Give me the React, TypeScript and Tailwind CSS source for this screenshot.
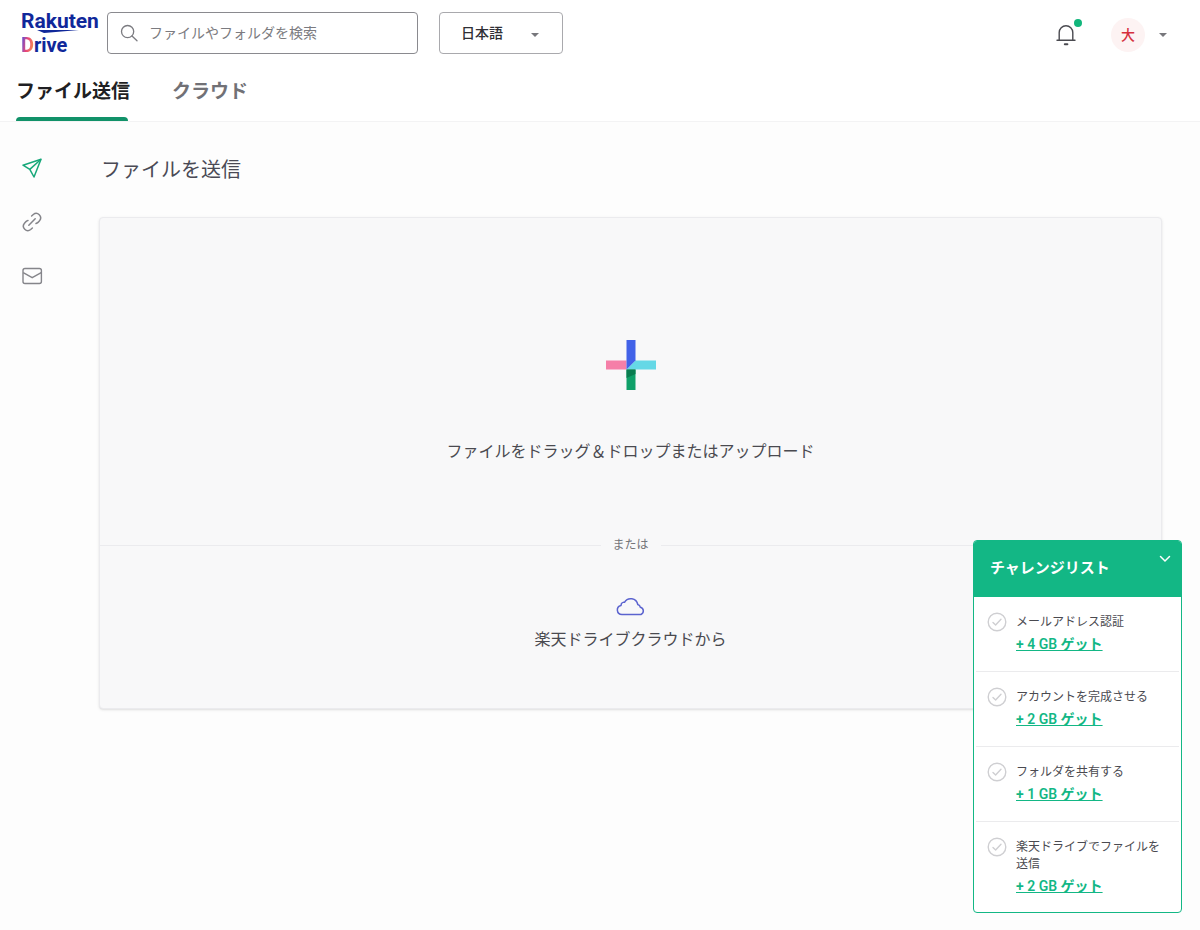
import { useState } from "react";

const challenges = [
    { title: "メールアドレス認証", reward: "+ 4 GB ゲット" },
    { title: "アカウントを完成させる", reward: "+ 2 GB ゲット" },
    { title: "フォルダを共有する", reward: "+ 1 GB ゲット" },
    { title: "楽天ドライブでファイルを送信", reward: "+ 2 GB ゲット" },
];

function Logo() {
    return (
        <a href="#" aria-label="Rakuten Drive" className="relative block w-[86px] shrink-0 font-[Roboto,sans-serif] font-bold text-[#10289a]">
            <span className="block text-[21px] leading-6">Rakuten</span>
            <span className="block text-xl leading-6">
                <span className="bg-linear-100 from-[#5b3fd0] from-10% via-[#e8407a] via-45% to-[#f7a01d] bg-clip-text text-transparent">D</span>rive
            </span>
            <svg viewBox="0 0 42 4" className="absolute left-4 top-[21px] w-[42px] h-1" fill="#10289a" aria-hidden="true">
                <path d="M0 0h42L7 3z" />
            </svg>
        </a>
    );
}

function Header() {
    return (
        <header className="bg-white border-b border-[#f3f3f4] pt-3">
            <div className="flex items-center h-[42px] pl-[21px] pr-[33px]">
                <Logo />
                <label className="flex items-center w-[311px] h-[42px] border border-[#8a8a8f] rounded px-3">
                    <svg viewBox="0 0 20 20" className="w-5 h-5 shrink-0" fill="none" stroke="#7b7b80" strokeWidth="1.3" strokeLinecap="round">
                        <circle cx="7.6" cy="8.6" r="6.1" />
                        <path d="M12 13l5 4.8" />
                    </svg>
                    <input
                        type="text"
                        aria-label="ファイルやフォルダを検索"
                        placeholder="ファイルやフォルダを検索"
                        className="w-full min-w-0 ml-[9px] text-sm outline-none placeholder:text-[#7b7b80]"
                    />
                </label>
                <div className="relative ml-[21px]">
                    <select aria-label="言語" className="appearance-none w-[124px] h-[42px] border border-[#a9a9ad] rounded bg-white pl-[21px] text-sm font-medium text-[#2f2f35]">
                        <option>日本語</option>
                        <option>English</option>
                    </select>
                    <svg viewBox="0 0 8 4" className="absolute right-6 top-[21px] w-2 h-1 pointer-events-none" fill="#77777c">
                        <path d="M0 0h8L4 4z" />
                    </svg>
                </div>
                <button aria-label="お知らせ" className="relative ml-auto mt-1 w-6 h-6">
                    <svg viewBox="0 0 24 24" className="w-6 h-6" fill="none" stroke="#4a4a50" strokeWidth="1.4" strokeLinecap="round">
                        <path d="M3 17.3h18" />
                        <path d="M5.2 17V9.5a6.8 6.8 0 0 1 13.6 0V17" />
                        <path d="M10.8 21.2h2.6" strokeWidth="2" />
                    </svg>
                    <span className="absolute -top-1 -right-1 w-2 h-2 rounded-full bg-[#12b67c]" />
                </button>
                <button aria-label="アカウント" className="flex items-center gap-[14px] ml-[33px] mt-1">
                    <span className="flex items-center justify-center w-[34px] h-[34px] rounded-full bg-[#fdf3f3] text-sm font-medium text-[#d5303e]">大</span>
                    <svg viewBox="0 0 8 4" className="w-2 h-1" fill="#77777c">
                        <path d="M0 0h8L4 4z" />
                    </svg>
                </button>
            </div>
            <nav className="flex gap-11 mt-[10px] px-4">
                <a href="#" className="relative flex items-center h-[57px] w-28 text-[19px] whitespace-nowrap font-bold text-[#1f1f23]">
                    ファイル送信
                    <span className="absolute inset-x-0 bottom-0 h-1 rounded-t bg-[#119269]" />
                </a>
                <a href="#" className="flex items-center h-[57px] text-[19px] font-bold text-[#717176]">クラウド</a>
            </nav>
        </header>
    );
}

function Sidebar() {
    return (
        <nav className="flex flex-col gap-[30px] pt-[34px] pl-5 w-[99px] shrink-0">
            <a href="#" aria-label="ファイルを送信">
                <svg viewBox="0 0 24 24" className="w-6 h-6" fill="none" stroke="#17a87a" strokeWidth="1.5" strokeLinejoin="round">
                    <path d="M21 3.2L3 9.2l6.800 4.200L14 21z" />
                    <path d="M21 3.200L9.800 13.400" />
                </svg>
            </a>
            <a href="#" aria-label="リンク">
                <svg viewBox="0 0 24 24" className="w-6 h-6" fill="none" stroke="#85858a" strokeWidth="1.5" strokeLinecap="round">
                    <path d="M11.600 6l1.700-1.500a4.400 4.400 0 0 1 6.200 6.200L18 12.400a4.400 4.400 0 0 1-2 1.100" />
                    <path d="M12.400 18l-1.700 1.500a4.400 4.400 0 0 1-6.200-6.200L6 11.600a4.400 4.400 0 0 1 2-1.100" />
                    <path d="M8.800 15.200l6.400-6.400" />
                </svg>
            </a>
            <a href="#" aria-label="メール">
                <svg viewBox="0 0 24 24" className="w-6 h-6" fill="none" stroke="#85858a" strokeWidth="1.4" strokeLinejoin="round">
                    <rect x="3" y="4.5" width="18.4" height="15" rx="2" />
                    <path d="M3.200 8.700l9 5 9-5" />
                </svg>
            </a>
        </nav>
    );
}

function UploadCard() {
    return (
        <section className="flex flex-col bg-[#f8f8f9] border border-[#ebebee] rounded shadow-sm">
            <button className="flex flex-col items-center pt-[122px] h-[319px]">
                <svg viewBox="0 0 50 50" className="w-[50px] h-[50px]">
                    <path d="M0 20.5h20.5v9H0z" fill="#f57fa8" />
                    <path d="M29.5 20.5H50v9H20.5z" fill="#65d8e6" />
                    <path d="M20.5 0h9v20.5l-9 9z" fill="#4262e8" />
                    <path d="M20.5 29.5h9V50h-9z" fill="#10a069" />
                    <path d="M20.5 29.5h9V34l-9 4z" fill="#0a7d50" />
                </svg>
                <span className="mt-[50px] text-base text-[#4a4a50]">ファイルをドラッグ＆ドロップまたはアップロード</span>
            </button>
            <div className="flex items-center gap-3 h-4 text-xs text-[#75757a]">
                <span className="h-px flex-1 bg-[#ebebee]" />
                または
                <span className="h-px flex-1 bg-[#ebebee]" />
            </div>
            <button className="flex flex-col items-center pt-[43px] h-[155px]">
                <svg viewBox="0 0 30 20" className="w-[30px] h-5" fill="none" stroke="#5b63cf" strokeWidth="1.5" strokeLinejoin="round">
                    <path d="M6 18.5a4.6 4.6 0 0 1-1-9.1C5 8 5.600 6.800 7 6.400c.8-.3 1.500-.1 1.500-.1a7.200 7.200 0 0 1 13.300 2.200c1.400.3 2.300 1.300 2.600 2.800a3.800 3.800 0 0 1 .6 7.200z" />
                </svg>
                <span className="mt-3 text-base text-[#4a4a50]">楽天ドライブクラウドから</span>
            </button>
        </section>
    );
}

function ChallengeList() {
    const [open, setOpen] = useState(true);

    return (
        <aside className="fixed right-[18px] bottom-[17px] w-[209px] bg-white border border-[#13b785] rounded overflow-hidden">
            <div className="flex items-start justify-between h-14 bg-[#13b785] pl-4 pr-[10px] text-white">
                <h2 className="text-[15px] leading-[54px] font-bold">チャレンジリスト</h2>
                <button aria-label="閉じる" onClick={() => setOpen(!open)} className="mt-3">
                    <svg viewBox="0 0 12 12" className="w-3 h-3" fill="none" stroke="currentColor" strokeWidth="1.5" strokeLinecap="round">
                        <path d="M1.5 3.5L6 8l4.5-4.5" />
                    </svg>
                </button>
            </div>
            {open && (
                <ul className="divide-y divide-[#ebebed] px-[2px]">
                    {challenges.map((item) => (
                        <li key={item.title} className="flex gap-[9px] pt-[17px] pb-[17px] pl-[11px] pr-[9px] last:pb-4">
                            <svg viewBox="0 0 20 20" className="w-5 h-5 shrink-0 -mt-[2px]" fill="none" stroke="#cfcfd2" strokeWidth="1.4" strokeLinecap="round" strokeLinejoin="round">
                                <circle cx="10" cy="10" r="8.8" />
                                <path d="M6 10.5l2.600 2.500L14 7.300" />
                            </svg>
                            <div>
                                <p className="text-xs leading-[17px] text-[#4a4a50]">{item.title}</p>
                                <a href="#" className="block mt-[3px] text-sm leading-5 font-semibold text-[#13b785] underline">{item.reward}</a>
                            </div>
                        </li>
                    ))}
                </ul>
            )}
        </aside>
    );
}

export default function App() {
    return (
        <div lang="ja" className="min-h-screen bg-[#fdfdfd] font-[Roboto,'Noto_Sans_CJK_JP',sans-serif]">
            <Header />
            <div className="flex">
                <Sidebar />
                <main className="flex-1 min-w-0 pt-[33px] pr-[38px] pb-10">
                    <h1 className="mb-8 pl-[2px] text-xl leading-[30px] text-[#4a4a55]">ファイルを送信</h1>
                    <UploadCard />
                </main>
            </div>
            <ChallengeList />
        </div>
    );
}
